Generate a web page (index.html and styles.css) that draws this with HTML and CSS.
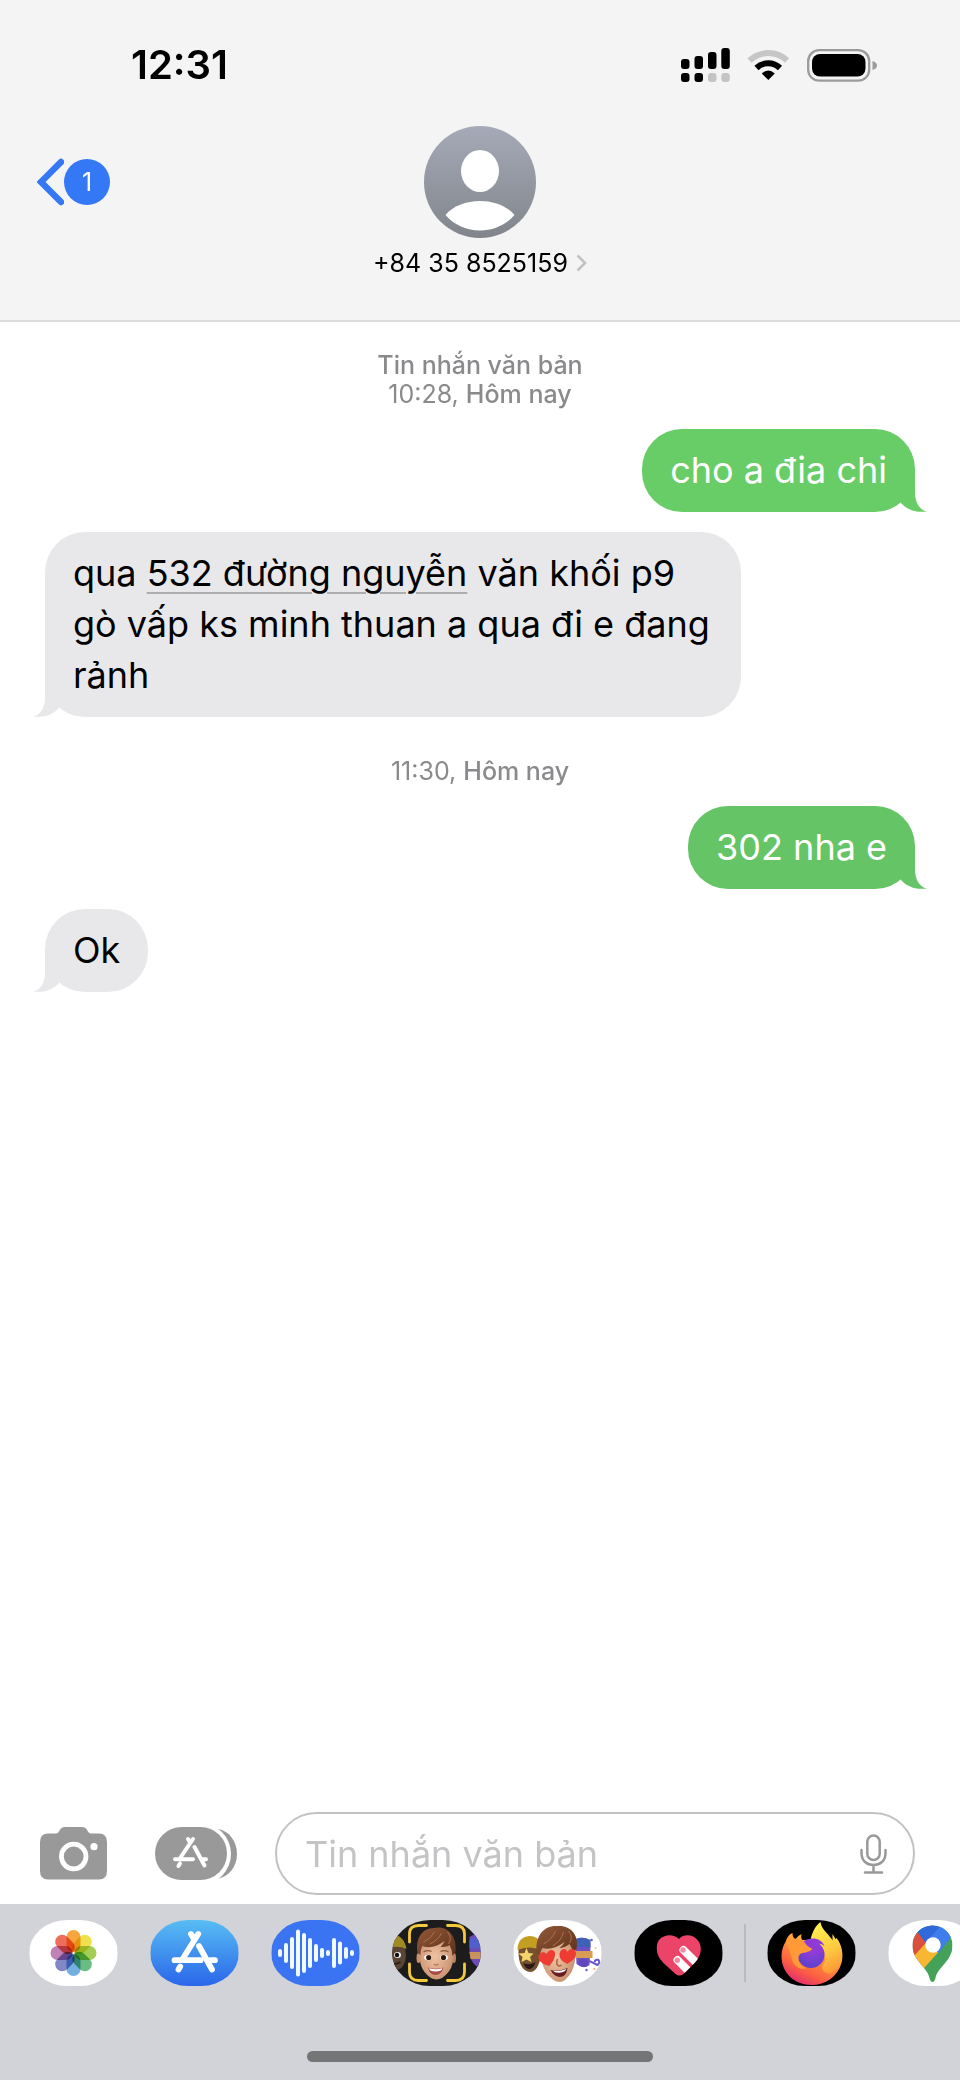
FILE: index.html
```html
<!DOCTYPE html>
<html lang="vi">
<head>
  <meta charset="UTF-8">
  <meta name="viewport" content="width=device-width, initial-scale=1.0">
  <title>+84 35 8525159</title>
  <link rel="stylesheet" href="styles.css">
</head>
<body>
  <header class="header">
    <div class="status-bar">
      <span class="clock">12:31</span>
      <div class="status-icons">
        <svg width="49" height="34" viewBox="0 0 49 34">
          <rect x="0" y="11" width="8.5" height="10" rx="3"/>
          <rect x="13.5" y="8" width="8.5" height="13" rx="3"/>
          <rect x="27" y="4" width="8.5" height="17" rx="3"/>
          <rect x="40.3" y="0" width="8.5" height="21" rx="3"/>
          <rect x="0" y="25" width="8.5" height="9" rx="3"/>
          <rect x="13.5" y="25" width="8.5" height="9" rx="3"/>
          <rect x="27" y="25" width="8.5" height="9" rx="3" fill="#c4c4c4"/>
          <rect x="40.3" y="25" width="8.5" height="9" rx="3" fill="#c4c4c4"/>
        </svg>
        <svg width="43" height="32" viewBox="0 0 43 32">
          <path d="M2.5 11.500A27.500 27.500 0 0 1 40 11.500" fill="none" stroke="#c6c6c6" stroke-width="6"/>
          <path d="M9.500 19A16.800 16.800 0 0 1 33 19" fill="none" stroke="#000" stroke-width="6"/>
          <path d="M14.800 24.500Q21.300 18.700 27.800 24.500L21.300 31Z"/>
        </svg>
        <svg width="70" height="33" viewBox="0 0 70 33">
          <rect x="1.200" y="1.200" width="61" height="30.500" rx="11" fill="none" stroke="#9b9b9b" stroke-width="2.300"/>
          <rect x="5" y="5" width="53.500" height="22.500" rx="8"/>
          <path d="M65.500 12Q70 13.500 70 16.500T65.500 21Z" fill="#9b9b9b"/>
        </svg>
      </div>
    </div>
    <nav class="nav">
      <button type="button" class="back" aria-label="Quay lại">
        <svg width="27" height="48" viewBox="0 0 27 48">
          <path d="M24 4L4 24L24 44" fill="none" stroke="#3478f6" stroke-width="6.500" stroke-linecap="round" stroke-linejoin="miter"/>
        </svg>
        <span class="unread">1</span>
      </button>
      <button type="button" class="contact">
        <svg width="112" height="112" viewBox="0 0 112 112">
          <defs>
            <linearGradient id="avatar" x1="0" y1="0" x2="0" y2="1">
              <stop offset="0" stop-color="#a6aab8"/>
              <stop offset="1" stop-color="#81858b"/>
            </linearGradient>
          </defs>
          <circle cx="56" cy="56" r="56" fill="url(#avatar)"/>
          <ellipse cx="56" cy="45" rx="19" ry="21" fill="#fff"/>
          <path d="M21.500 89C29 80 42 75 56 75S83 80 90.500 89C82 99 69 104.500 56 104.500S30 99 21.500 89Z" fill="#fff"/>
        </svg>
        <span class="contact-name">+84 35 8525159
          <svg width="11" height="18" viewBox="0 0 11 18">
            <path d="M1.500 1.500L9 9L1.500 16.500" fill="none" stroke="#c2c2c4" stroke-width="2.500"/>
          </svg>
        </span>
      </button>
    </nav>
  </header>

  <main class="messages">
    <p class="stamp"><b>Tin nhắn văn bản</b><br>10:28, <b>Hôm nay</b></p>
    <div class="bubble sent">cho a đia chi
      <svg class="tail" width="32" height="45" viewBox="0 -12 32 45"><path d="M20 -12V13C20 23 24 31 32 32.500C20 34 11 30 6 24L0 8Z"/></svg>
    </div>
    <div class="bubble received">qua <a href="#">532 đường nguyễn</a> văn khối p9 gò vấp ks minh thuan a qua đi e đang rảnh
      <svg class="tail" width="32" height="45" viewBox="0 -12 32 45"><path d="M12 -12V13C12 23 8 31 0 32.500C12 34 21 30 26 24L32 8Z"/></svg>
    </div>
    <p class="stamp">11:30, <b>Hôm nay</b></p>
    <div class="bubble sent sent-late">302 nha e
      <svg class="tail" width="32" height="45" viewBox="0 -12 32 45"><path d="M20 -12V13C20 23 24 31 32 32.500C20 34 11 30 6 24L0 8Z"/></svg>
    </div>
    <div class="bubble received">Ok
      <svg class="tail" width="32" height="45" viewBox="0 -12 32 45"><path d="M12 -12V13C12 23 8 31 0 32.500C12 34 21 30 26 24L32 8Z"/></svg>
    </div>
  </main>

  <form class="compose">
    <button type="button" aria-label="Máy ảnh">
      <svg width="67" height="53" viewBox="0 0 67 53" fill="#999">
        <path d="M8 6.500H16C20 6.500 19 0 25 0H42C48 0 47 6.500 51 6.500H59Q67 6.500 67 15V44Q67 52.500 59 52.500H8Q0 52.500 0 44V15Q0 6.500 8 6.500Z"/>
        <circle cx="33.700" cy="29.500" r="12.300" fill="none" stroke="#fff" stroke-width="4.800"/>
        <circle cx="54" cy="19.700" r="3.600" fill="#fff"/>
      </svg>
    </button>
    <button type="button" aria-label="Ứng dụng">
      <svg width="82" height="54" viewBox="0 0 82 54">
        <path d="M63 2C74 4 82 14 82 27S74 49 63 52Z" fill="#999"/>
        <rect x="-4" y="-4" width="80" height="62" rx="31" fill="#fff"/>
        <rect x="0" y="0" width="72" height="53" rx="26.500" fill="#999"/>
        <g fill="none" stroke="#fff" stroke-width="4" stroke-linecap="round">
          <path d="M38 12L24.500 32M33 12L35 15.500M39.500 20L49.500 38.500M20 32.200H38M46 32.200H51M25 36.500L23.500 39"/>
        </g>
      </svg>
    </button>
    <div class="field">
      <input type="text" aria-label="Tin nhắn văn bản" placeholder="Tin nhắn văn bản">
      <button type="button" aria-label="Đọc chính tả">
        <svg width="27" height="40" viewBox="0 0 27 40" fill="none" stroke="#999" stroke-width="2.500" stroke-linecap="round">
          <rect x="7.300" y="1.500" width="12.400" height="24.500" rx="6.200"/>
          <path d="M1.500 16V19C1.500 27 7 31 13.500 31S25.500 27 25.500 19V16M13.500 31V38.500M5 38.500H22"/>
        </svg>
      </button>
    </div>
  </form>

  <footer class="drawer">
    <div class="apps">
      <div class="app-group">
        <button type="button" class="app" aria-label="Ảnh">
          <svg viewBox="0 0 88 66">
            <rect width="88" height="66" fill="#fff"/>
            <g class="petals" transform="translate(44 33)">
              <rect x="-7" y="-23" width="14" height="22" rx="7" fill="#f6a63c"/>
              <rect x="-7" y="-23" width="14" height="22" rx="7" fill="#efe14c" transform="rotate(45)"/>
              <rect x="-7" y="-23" width="14" height="22" rx="7" fill="#a5cd55" transform="rotate(90)"/>
              <rect x="-7" y="-23" width="14" height="22" rx="7" fill="#69bd80" transform="rotate(135)"/>
              <rect x="-7" y="-23" width="14" height="22" rx="7" fill="#71b0e0" transform="rotate(180)"/>
              <rect x="-7" y="-23" width="14" height="22" rx="7" fill="#8287c6" transform="rotate(225)"/>
              <rect x="-7" y="-23" width="14" height="22" rx="7" fill="#c081b6" transform="rotate(270)"/>
              <rect x="-7" y="-23" width="14" height="22" rx="7" fill="#ee6e5c" transform="rotate(315)"/>
            </g>
          </svg>
        </button>
        <button type="button" class="app" aria-label="App Store">
          <svg viewBox="0 0 88 66">
            <defs>
              <linearGradient id="store" x1="0" y1="0" x2="0" y2="1">
                <stop offset="0" stop-color="#58bdf3"/>
                <stop offset="1" stop-color="#2a66ea"/>
              </linearGradient>
            </defs>
            <rect width="88" height="66" fill="url(#store)"/>
            <path d="M47.700 14L31.500 40M40.500 14L43.500 19M48.500 26L61.500 49.500M24 40.200H50M60 40.200H64.500M29.700 46.500L28 49.500" fill="none" stroke="#fff" stroke-width="5.800" stroke-linecap="round"/>
          </svg>
        </button>
        <button type="button" class="app" aria-label="Âm thanh">
          <svg viewBox="0 0 88 66">
            <rect width="88" height="66" fill="#3b74f2"/>
            <path d="M8.500 31V35M14.500 25V41M20.500 19V47M26.500 11.500V54.500M32.500 15V51M38.500 20V46M44.500 26V40M50.500 30V36M56.500 32V34M62.500 20V46M68.500 23.500V42.500M74.500 29V37M80.500 32V34" fill="none" stroke="#eefaff" stroke-width="4" stroke-linecap="round"/>
          </svg>
        </button>
        <button type="button" class="app" aria-label="Memoji">
          <svg viewBox="0 0 88 66">
            <defs>
              <linearGradient id="hair" x1="0" y1="0" x2="1" y2="1">
                <stop offset="0" stop-color="#94593a"/>
                <stop offset="1" stop-color="#5b3019"/>
              </linearGradient>
              <radialGradient id="skin" cx=".45" cy=".5" r=".6">
                <stop offset="0" stop-color="#f0c3a3"/>
                <stop offset="1" stop-color="#c58d6c"/>
              </radialGradient>
            </defs>
            <rect width="88" height="66" fill="#1c1c1c"/>
            <ellipse cx="4" cy="35" rx="9.500" ry="15" fill="#5a4535"/>
            <path d="M0 14Q12 16 14 29Q8 26 0 27Z" fill="#a08a22"/>
            <ellipse cx="5" cy="35" rx="3.500" ry="3" fill="#eee"/>
            <circle cx="4.500" cy="35" r="2.200" fill="#111"/>
            <path d="M0 44Q5 44 8 42" fill="none" stroke="#2b1c14" stroke-width="2"/>
            <path d="M77 17Q82 13 88 15V48Q79 46 77 33Z" fill="#6d4bb5"/>
            <path d="M77 20Q82 16 88 18V28H77Z" fill="#4f5fcb"/>
            <path d="M77 32H88V39H78Z" fill="#c9925a"/>
            <ellipse cx="26" cy="38" rx="2" ry="5" fill="#cc8f6c"/>
            <ellipse cx="61.500" cy="38" rx="2" ry="5" fill="#c07f5c"/>
            <path d="M27 28Q27 14 44 14T61 28Q62 45 56 52Q50 59.500 44 59.500T32 52Q26 45 27 28Z" fill="url(#skin)"/>
            <path d="M25 33C23 20 28 8 42 8C54 5 65 15 63 32L60 36Q60 30 57 25Q55 27 48 27Q51 24 52 21Q40 30 30 26Q28 29 28 35Z" fill="url(#hair)"/>
            <path d="M31 22Q38 19 42 12M37 24Q46 20 49 13M56 24Q60 18 55 12" fill="none" stroke="#a97350" stroke-width="1"/>
            <ellipse cx="35.500" cy="37.500" rx="3.800" ry="2.800" fill="#fff"/>
            <ellipse cx="51.500" cy="37.500" rx="3.800" ry="2.800" fill="#fff"/>
            <circle cx="36.200" cy="37.500" r="2.600" fill="#2d170e"/>
            <circle cx="51" cy="37.500" r="2.600" fill="#2d170e"/>
            <path d="M31 32Q35 29.500 39 31.500M48 31.500Q52 29.500 56 32" fill="none" stroke="#8a5a3c" stroke-width="1.300"/>
            <path d="M41.500 44Q43.500 46 46 44" fill="none" stroke="#b87c5c" stroke-width="1.400"/>
            <path d="M35.500 47.500Q43 50 51 47.500Q49 55 43 55T35.500 47.500Z" fill="#a84848"/>
            <path d="M36.500 48.200Q43 50.200 50 48.200Q49 51.500 43 51.500T36.500 48.200Z" fill="#fff"/>
            <path d="M17 22V14Q17 5.500 26 5.500H34M55 5.500H63Q72 5.500 72 14V22M17 44V52Q17 60.500 26 60.500H34M55 60.500H63Q72 60.500 72 52V44" fill="none" stroke="#f4c93c" stroke-width="2.800" stroke-linecap="round"/>
          </svg>
        </button>
        <button type="button" class="app" aria-label="Nhãn dán Memoji">
          <svg viewBox="0 0 88 66">
            <rect width="88" height="66" fill="#fff"/>
            <path d="M5 27Q4 51 17 52Q27 51 28 27Z" fill="#75502f"/>
            <path d="M4 30Q4 17 16 16Q28 16 28 30Q16 25 4 30Z" fill="#c49d23"/>
            <path d="M13 28L15 33L20 33.500L16.500 37L18 42L13 39.500L8 42L9 37L5 33.500L11 33Z" fill="#f3d46a"/>
            <path d="M10 43Q16 46 22 42Q20 49 16 49T10 43Z" fill="#2b1717"/>
            <path d="M62 22Q63 17 71 18Q78 19 77 27L76 45Q70 50 63 44Z" fill="#6d4fc4"/>
            <path d="M62 19Q69 16 77 20V27H62Z" fill="#3e60b8"/>
            <path d="M62 31H79V38H62Z" fill="#d99c55"/>
            <path d="M64 41Q70 44 76 41L84 45Q87 43 85 40Q82 39 81 42" fill="none" stroke="#6d54cb" stroke-width="2"/>
            <ellipse cx="70" cy="43" rx="5" ry="4" fill="#6149bd"/>
            <circle cx="78" cy="20" r="1.300" fill="#5561d5"/>
            <circle cx="82" cy="28" r="1" fill="#f0c75a"/>
            <circle cx="73" cy="50" r="1.200" fill="#5561d5"/>
            <circle cx="81" cy="49" r="1" fill="#f0a05a"/>
            <path d="M27 26Q27 13 45 13T62 27Q63 42 58 52Q52 62 46 62T33 53Q26 42 27 26Z" fill="url(#skin)"/>
            <path d="M23 31C22 15 31 5 44 6C57 5 66 15 63 29L60 33Q59 29 56 24Q51 28 46 28Q50 25 51 22Q39 31 29 28L25 35Z" fill="url(#hair)"/>
            <path d="M30 24Q38 20 42 11M39 26Q48 21 50 12M56 23Q60 17 55 11" fill="none" stroke="#a97350" stroke-width="1"/>
            <path d="M36 46C28 44 24 40 25 36C26 32 31 31 33 34C35 29 41 29 41.500 33C42 38 39 42 36 46Z" fill="#ee3c33"/>
            <path d="M54 44C47 41 45 37 46.500 32C48 28 53 28 54 32C57 27 62 29 62.500 33C63 38 58 41 54 44Z" fill="#ee3c33"/>
            <path d="M44 39Q42 44 45 46Q47 46 48 45" fill="none" stroke="#a8663f" stroke-width="1.500"/>
            <path d="M37 50Q45 52 54 48Q53 57 46 57Q40 56 37 50Z" fill="#681d20"/>
            <path d="M39 50.500Q45 52 53 49Q52 52 46 52.800Q41 53 39 50.500Z" fill="#fff"/>
          </svg>
        </button>
        <button type="button" class="app" aria-label="Digital Touch">
          <svg viewBox="0 0 88 66">
            <defs>
              <clipPath id="heart">
                <path d="M44.500 19C50 13 59 15 63 20C69 27 66 37 60 43L49 54Q45 57 41 54L29 43C22 36 20 27 24.500 20C30 14 39 14 44.500 19Z"/>
              </clipPath>
            </defs>
            <rect width="88" height="66" fill="#000"/>
            <g clip-path="url(#heart)">
              <rect width="88" height="66" fill="#ec4368"/>
              <path d="M49 30L69 50M43 40L60 57" stroke="#fff" stroke-width="8" stroke-linecap="round"/>
              <circle cx="48.500" cy="30" r="2.700" fill="#ee8aa1"/>
              <circle cx="42.800" cy="40.300" r="2.700" fill="#ee8aa1"/>
            </g>
          </svg>
        </button>
      </div>
      <span class="divider"></span>
      <div class="app-group">
        <button type="button" class="app" aria-label="Firefox">
          <svg viewBox="0 0 88 66">
            <defs>
              <linearGradient id="fox" x1=".85" y1=".1" x2=".3" y2="1">
                <stop offset="0" stop-color="#ffd94a"/>
                <stop offset=".4" stop-color="#ff9638"/>
                <stop offset=".75" stop-color="#fb5d43"/>
                <stop offset="1" stop-color="#e22c70"/>
              </linearGradient>
              <linearGradient id="flame" x1=".3" y1="0" x2=".6" y2="1">
                <stop offset="0" stop-color="#fff150"/>
                <stop offset=".6" stop-color="#fdc840"/>
                <stop offset="1" stop-color="#ff9838"/>
              </linearGradient>
              <radialGradient id="globe" cx=".55" cy=".3" r=".8">
                <stop offset="0" stop-color="#a03bdc"/>
                <stop offset="1" stop-color="#4f43c9"/>
              </radialGradient>
            </defs>
            <rect width="88" height="66" fill="#000"/>
            <path d="M25 13Q25 18 28 19Q30 16 34 14Q33 18 35 20L45 20L60 15L66 21L69 18C75 25 76 36 74 43C70 57 58 65 44 65C27 65 14 53 14 36C14 30 16 25 18 22Q20 15 25 13Z" fill="url(#fox)"/>
            <path d="M43 20C45 11 48 6 53 2C54 10 61 13 65 21L65 14C68 18 69 22 70 25L70 20C77 32 75 44 67 51C60 57 53 50 55 46C62 38 56 22 43 20Z" fill="url(#flame)"/>
            <circle cx="43.500" cy="34.500" r="13.500" fill="url(#globe)"/>
            <path d="M35 22C43 16 54 18 57 26Q53 23 50 24Q56 28 56 34L42 30Z" fill="#8f3ad6"/>
            <path d="M19 22Q24 18 30 19Q36 19 39 25Q41 27 45 29Q42 32 35 33Q31 34 31 38C31 44 35 47 39 48C33 51 25 46 24 37Z" fill="#ff9a36"/>
          </svg>
        </button>
        <button type="button" class="app" aria-label="Google Maps">
          <svg viewBox="0 0 88 66">
            <defs>
              <clipPath id="pin">
                <path d="M44 62Q42 62 41 58C39 47 24 41 24 25.500A20 20 0 0 1 64 25.500C64 41 49 47 47 58Q46 62 44 62Z"/>
              </clipPath>
            </defs>
            <rect width="88" height="66" fill="#fff"/>
            <g clip-path="url(#pin)">
              <rect width="88" height="66" fill="#43a257"/>
              <path d="M20 40L37 20L50 32L32 52Z" fill="#f7b733"/>
              <path d="M18 4L29 12L39 21L22 40Z" fill="#d9503f"/>
              <path d="M29 12L34 0H60L38 24Z" fill="#3069da"/>
              <path d="M38 22L57 0L70 8L50 33Z" fill="#3f7cec"/>
            </g>
            <circle cx="44.500" cy="25" r="7.700" fill="#fff"/>
          </svg>
        </button>
      </div>
    </div>
    <div class="home-bar"></div>
  </footer>
</body>
</html>
```
FILE: styles.css
```css
* {
    box-sizing: border-box;
}
body {
    display: flex;
    flex-direction: column;
    min-height: 100vh;
    margin: 0;
    background: #fff;
    color: #000;
    font-family: Inter, "Noto Sans", sans-serif;
    overflow-x: hidden;
}
button {
    display: flex;
    align-items: center;
    padding: 0;
    border: none;
    background: none;
    color: inherit;
    font: inherit;
    cursor: pointer;
}
svg {
    display: block;
    flex: none;
}

/* header */
.header {
    background: #f4f4f4;
    border-bottom: 2px solid #dcdcdc;
}
.status-bar {
    display: flex;
    justify-content: space-between;
    align-items: center;
    height: 126px;
    padding: 4px 83px 0 131px;
}
.clock {
    font-size: 40px;
    font-weight: 600;
    line-height: 48px;
}
.status-icons {
    display: flex;
    align-items: center;
    gap: 17px;
    height: 48px;
}
.nav {
    display: grid;
    grid-template-columns: 1fr auto 1fr;
    align-items: start;
    padding: 0 37px 42px;
}
.back {
    height: 112px;
    justify-self: start;
}
.unread {
    width: 46px;
    height: 46px;
    border-radius: 50%;
    background: #3478f6;
    color: #fff;
    font-size: 25px;
    line-height: 46px;
}
.contact {
    flex-direction: column;
    gap: 10px;
}
.contact-name {
    display: flex;
    align-items: center;
    gap: 8px;
    font-size: 25px;
    line-height: 30px;
}

/* conversation */
.messages {
    flex: 1;
    display: flex;
    flex-direction: column;
    align-items: flex-start;
    gap: 20px;
    padding: 29px 45px;
}
.stamp {
    align-self: center;
    margin: 0;
    color: #8a8a8d;
    font-size: 25px;
    line-height: 29px;
    text-align: center;
}
.stamp b {
    font-weight: 500;
}
.bubble + .stamp {
    margin-top: 20px;
}
.bubble {
    position: relative;
    max-width: 80%;
    padding: 16px 28px;
    border-radius: 40px;
    font-size: 36px;
    line-height: 51px;
}
.bubble a {
    color: inherit;
    text-decoration: underline 2px #adadb0;
    text-underline-offset: 6px;
}
.sent {
    align-self: flex-end;
    background: #68cd67;
    color: #fff;
    fill: #68cd67;
}
.sent-late {
    background: #64c466;
    fill: #64c466;
}
.received {
    background: #e8e8ea;
    fill: #e8e8ea;
}
.tail {
    position: absolute;
    bottom: 0;
}
.sent .tail {
    right: -12px;
}
.received .tail {
    left: -12px;
}

/* text box */
.compose {
    display: flex;
    align-items: center;
    gap: 38px;
    margin: 0;
    padding: 0 45px 9px 40px;
}
.compose > button:first-child {
    margin-right: 10px;
}
.field {
    flex: 1;
    min-width: 0;
    display: flex;
    align-items: center;
    height: 83px;
    padding: 0 26px 0 28px;
    border: 2px solid #c2c2c2;
    border-radius: 42px;
}
.field input {
    flex: 1;
    min-width: 0;
    padding: 0;
    border: none;
    outline: none;
    background: none;
    font: inherit;
    font-size: 36px;
}
.field input::placeholder {
    color: #c4c4c6;
    opacity: 1;
}

/* app drawer */
.drawer {
    display: flex;
    flex-direction: column;
    align-items: center;
    padding: 16px 0 18px;
    background: #d2d3d8;
}
.apps {
    align-self: stretch;
    display: flex;
    align-items: center;
    gap: 21px;
    padding-left: 29px;
    overflow: hidden;
}
.app-group {
    display: flex;
    gap: 32px;
}
.app {
    flex: none;
    width: 89px;
    height: 66px;
    border-radius: 38px / 33px;
    overflow: hidden;
}
.app svg {
    width: 100%;
    height: 100%;
}
.petals rect {
    mix-blend-mode: multiply;
}
.divider {
    flex: none;
    width: 2px;
    height: 58px;
    background: #b9babe;
}
.home-bar {
    width: 36%;
    height: 11px;
    margin-top: 65px;
    border-radius: 6px;
    background: #747576;
}
```
